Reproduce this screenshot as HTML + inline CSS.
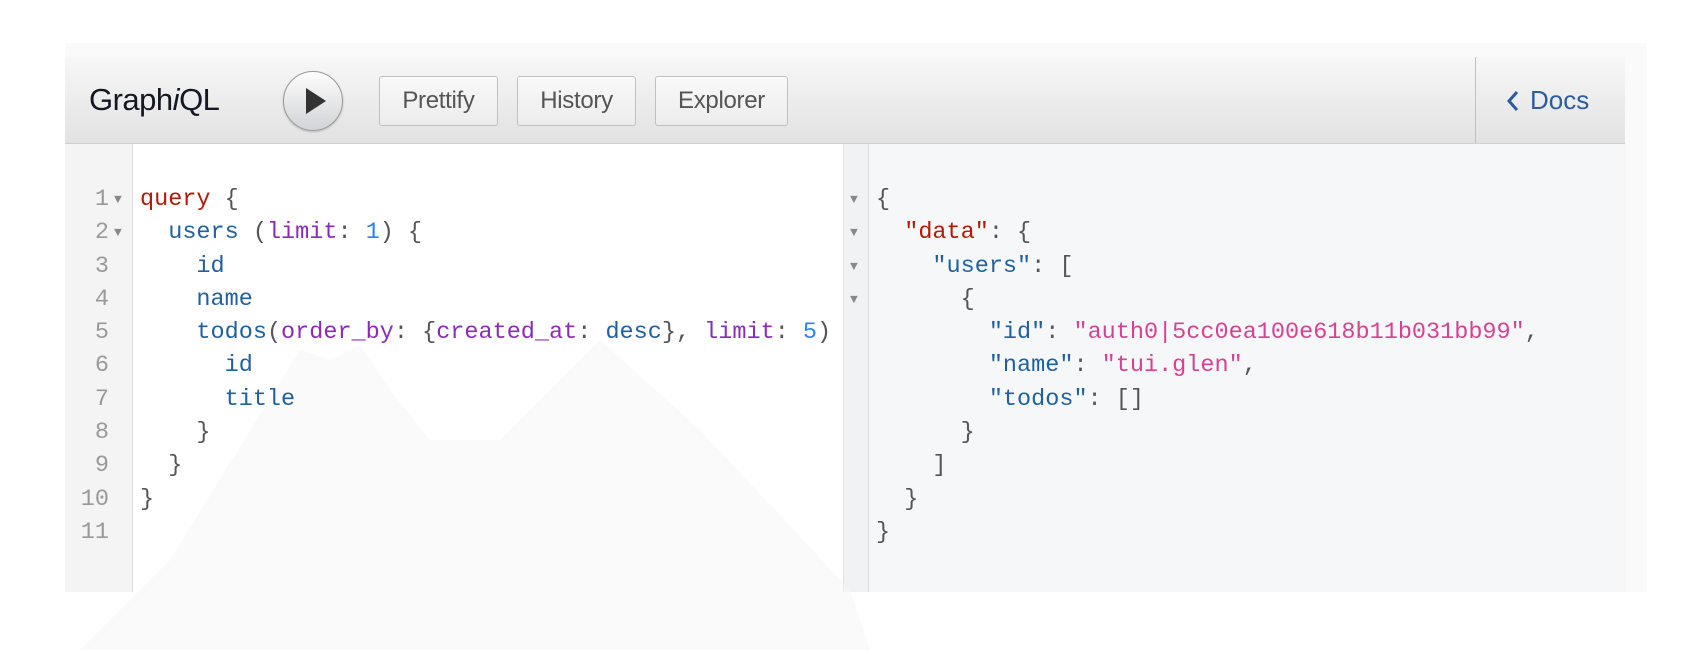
<!DOCTYPE html>
<html><head><meta charset="utf-8">
<style>
html,body{margin:0;padding:0;width:1700px;height:650px;overflow:hidden;background:#fff;font-family:"Liberation Sans",sans-serif;}
.abs{position:absolute}
#bgm{position:absolute;left:0;top:0;width:1700px;height:650px}
.panel{left:65px;top:43px;width:1582px;height:549px;background:#fafafa}
.toolbar{left:65px;top:57px;width:1560px;height:86px;background:linear-gradient(#f7f7f7,#e2e2e2);border-bottom:1px solid #d0d0d0}
.title{left:89px;top:82px;font-size:31px;color:#141823;letter-spacing:-0.5px}
.play{left:283px;top:71px;width:58px;height:58px;border-radius:50%;border:1px solid #999;background:linear-gradient(#fdfdfd,#d2d3d6);box-shadow:0 1px 2px rgba(0,0,0,.2)}
.btn{top:76px;height:48px;border:1px solid #c0c0c0;border-radius:3px;background:linear-gradient(#f9f9f9,#ececec);font-size:24px;color:#555;line-height:48px;text-align:center;box-shadow:0 1px 0 rgba(255,255,255,.6) inset;letter-spacing:-0.3px}
.docs{left:1475px;top:57px;width:150px;height:86px;border-left:1px solid #c0c0c0;color:#2b5d9e;font-size:26px;line-height:86px}
.gutter{left:65px;top:144px;width:67px;height:448px;background:#f4f4f4;border-right:1px solid #ddd}
.editor{left:133px;top:144px;width:710px;height:448px;background:#fff}
.result{left:843px;top:144px;width:782px;height:448px;background:#f6f7f8;border-left:1px solid #e0e0e0}
.rgut{left:844px;top:144px;width:24px;height:448px;background:#f1f2f3;border-right:1px solid #ddd}
.code{font-family:"Liberation Mono","DejaVu Sans Mono",monospace;font-size:23.5px;line-height:33.3px;white-space:pre;color:#555}
.ln{left:65px;top:183px;width:44px;text-align:right;color:#999}
.ar{color:#888;font-size:13px}
.kw{color:#b11a04}.f{color:#1f61a0}.a{color:#8b2bb9}.n{color:#2882f9}.s{color:#d64292}
</style></head><body>
<div class="abs panel"></div>
<div class="abs gutter"></div>
<div class="abs editor"></div>
<div class="abs result"></div>
<div class="abs rgut"></div>
<svg id="bgm" viewBox="0 0 1700 650">
<polygon points="80,650 170,560 300,350 330,360 360,345 390,390 430,440 500,440 600,340 700,430 850,590 870,650" fill="#f6f6f6" opacity="0.5"/>
</svg>
<div class="abs toolbar"></div>
<div class="abs title">Graph<i>i</i>QL</div>
<div class="abs play"><svg width="58" height="58" viewBox="0 0 58 58"><polygon points="22,16 22,42 42,29" fill="#333"/></svg></div>
<div class="abs btn" style="left:379px;width:117px">Prettify</div>
<div class="abs btn" style="left:517px;width:117px">History</div>
<div class="abs btn" style="left:655px;width:131px">Explorer</div>
<div class="abs docs"><svg style="position:absolute;left:30px;top:33px" width="14" height="22" viewBox="0 0 14 22"><path d="M11 2 L3 11 L11 20" fill="none" stroke="#2b5d9e" stroke-width="3"/></svg><span style="position:absolute;left:54px">Docs</span></div>
<div class="abs code ln">1
2
3
4
5
6
7
8
9
10
11</div>
<div class="abs code ar" style="left:114px;top:183px;line-height:33.3px">▼
▼</div>
<div class="abs code" style="left:140px;top:183px"><span class="kw">query</span> {
  <span class="f">users</span> (<span class="a">limit</span>: <span class="n">1</span>) {
    <span class="f">id</span>
    <span class="f">name</span>
    <span class="f">todos</span>(<span class="a">order_by</span>: {<span class="a">created_at</span>: <span class="f">desc</span>}, <span class="a">limit</span>: <span class="n">5</span>)
      <span class="f">id</span>
      <span class="f">title</span>
    }
  }
}
</div>
<div class="abs code ar" style="left:850px;top:183px;line-height:33.3px">▼
▼
▼
▼</div>
<div class="abs code" style="left:876px;top:183px">{
  <span class="kw">"data"</span>: {
    <span class="f">"users"</span>: [
      {
        <span class="f">"id"</span>: <span class="s">"auth0|5cc0ea100e618b11b031bb99"</span>,
        <span class="f">"name"</span>: <span class="s">"tui.glen"</span>,
        <span class="f">"todos"</span>: []
      }
    ]
  }
}</div>
</body></html>
